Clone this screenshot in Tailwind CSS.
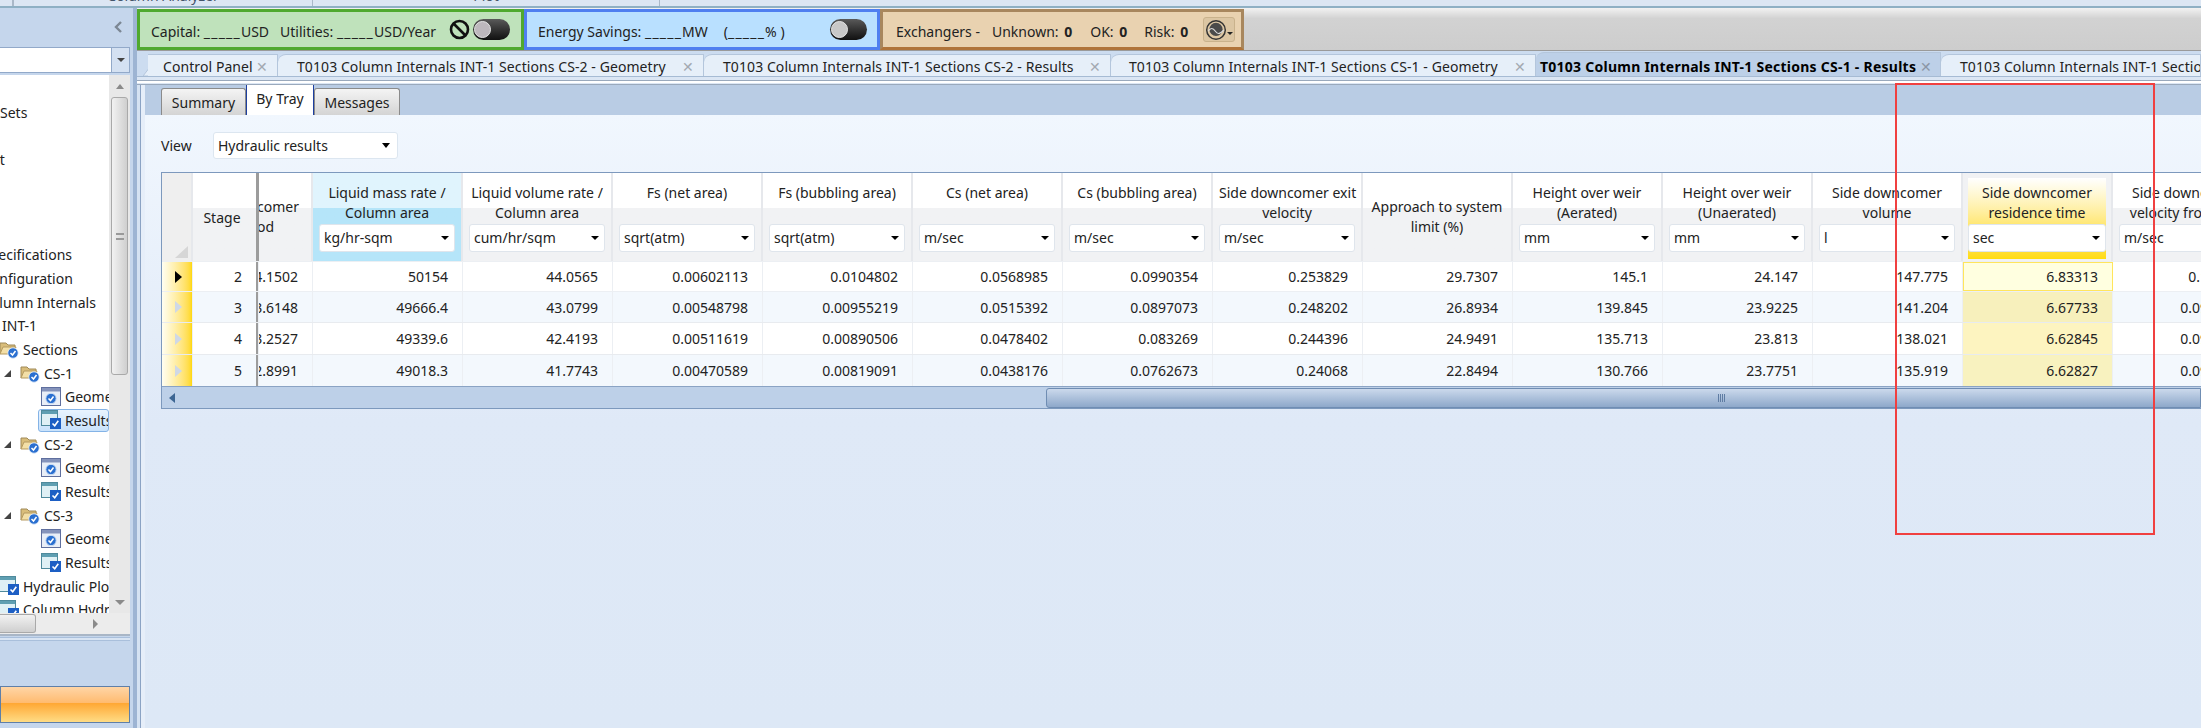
<!DOCTYPE html>
<html lang="en">
<head>
    <meta charset="UTF-8">
    <title>T0103 Column Internals</title>
    <script src="https://cdn.jsdelivr.net/npm/@tailwindcss/browser@4"></script>
</head>
<body>
<svg class="hidden">
    <symbol id="folder" viewBox="0 0 20 20">
        <path d="M1 15V4h6l2 2h7v2" fill="#d9bd7a" stroke="#a08a58"/>
        <path d="M1 15l3-7h13l-3 7z" fill="#f3dfa6" stroke="#b59a60"/>
        <circle cx="14" cy="14" r="5.2" fill="#2a6fd0" stroke="#e3eefa" stroke-width="0.8"/>
        <path d="M11.5 14l2 2 3-4" fill="none" stroke="#fff" stroke-width="1.5"/>
    </symbol>
    <symbol id="geom" viewBox="0 0 20 20">
        <rect x="0.5" y="0.5" width="19" height="18" fill="#e9eef7" stroke="#5f6f9e"/>
        <rect x="1" y="1" width="18" height="3.5" fill="#8593bb"/>
        <circle cx="10" cy="11.5" r="5.2" fill="#2a6fd0" stroke="#cfe0f6"/>
        <path d="M7.5 11.5l2 2 3-4" fill="none" stroke="#fff" stroke-width="1.5"/>
    </symbol>
    <symbol id="res" viewBox="0 0 20 20">
        <rect x="0.5" y="0.5" width="16" height="15" fill="#dff0f5" stroke="#4f8a9c"/>
        <rect x="1" y="1" width="15" height="3" fill="#5f9fb2"/>
        <rect x="9" y="8" width="11" height="11" fill="#1d5fc4"/>
        <path d="M11.5 13.5l2.2 2.2 3.6-5" fill="none" stroke="#fff" stroke-width="1.6"/>
    </symbol>
</svg>

<div class="relative w-[2201px] h-[728px] overflow-hidden bg-[#dde8f6] text-[14px] text-[#222] font-['Noto_Sans',sans-serif]">

    <!-- menu strip, cut off at the top of the shot -->
    <div class="flex h-[8px] overflow-hidden bg-[#dce6f3] border-b-2 border-[#8fb0c4] text-[#44546a]">
        <div class="w-[13px] border-r border-[#aab8c8]"></div>
        <div class="w-[300px] border-x border-[#aab8c8] text-center leading-[20px] -mt-[14px]">Column Analyzer</div>
        <div class="w-[347px] border-r border-[#aab8c8] text-center leading-[20px] -mt-[14px]">Plot</div>
    </div>

    <div class="flex h-[720px]">
        <!-- left navigator -->
        <div class="w-[137px] shrink-0 bg-[#c5d6ec] border-r-4 border-[#9db4d3]">
            <div class="h-[39px] flex items-center justify-end pr-[11px] pb-[2px]">
                <svg width="8" height="12" viewBox="0 0 8 12"><path d="M7 1L2 6l5 5" fill="none" stroke="#7c8794" stroke-width="2.4"/></svg>
            </div>
            <div class="h-[26px] w-[130px] flex justify-end bg-white border-y border-r border-[#92a9c9]">
                <div class="w-[18px] bg-[#d4e1f2] border-l border-[#92a9c9] flex items-center justify-center">
                    <div class="w-0 h-0 border-x-[4px] border-t-[4px] border-x-transparent border-t-[#444]"></div>
                </div>
            </div>
            <div class="mt-[2px] w-[130px] h-[561px] border-b-2 border-[#a9b6c6] bg-white">
                <div class="flex h-[538px]">
                    <div class="w-[109px] h-full overflow-hidden">
                        <div class="-ml-[40px] w-[149px] pt-[2px] [&_svg]:shrink-0 [&>div]:h-[23.7px] [&>div]:flex [&>div]:items-center [&>div]:whitespace-nowrap [&>div]:overflow-hidden">
                            <div></div>
                            <div class="pl-[40px]">Sets</div>
                            <div></div>
                            <div class="pl-[9px]">Input</div>
                            <div></div>
                            <div></div>
                            <div></div>
                            <div class="pl-[22px]">Specifications</div>
                            <div class="pl-[22px]">Configuration</div>
                            <div class="pl-[22px]">Column Internals</div>
                            <div class="pl-[42px]">INT-1</div>
                            <div class="pl-[39px] gap-[4px]"><svg class="w-[20px] h-[20px]"><use href="#folder"/></svg>Sections</div>
                            <div class="pl-[43px]">
                                <svg class="w-[9px] h-[9px] mr-[8px]" viewBox="0 0 9 9"><path d="M8 1v7H1z" fill="#444"/></svg>
                                <svg class="w-[20px] h-[20px] mr-[4px]"><use href="#folder"/></svg>CS-1
                            </div>
                            <div class="pl-[81px] gap-[4px]"><svg class="w-[20px] h-[20px]"><use href="#geom"/></svg>Geometry</div>
                            <div class="ml-[78px] pl-[2px] gap-[4px] bg-gradient-to-b from-[#e8f3fe] to-[#c9e2fb] border border-[#84b3e6] rounded-[3px]"><svg class="w-[20px] h-[20px]"><use href="#res"/></svg>Results</div>
                            <div class="pl-[43px]">
                                <svg class="w-[9px] h-[9px] mr-[8px]" viewBox="0 0 9 9"><path d="M8 1v7H1z" fill="#444"/></svg>
                                <svg class="w-[20px] h-[20px] mr-[4px]"><use href="#folder"/></svg>CS-2
                            </div>
                            <div class="pl-[81px] gap-[4px]"><svg class="w-[20px] h-[20px]"><use href="#geom"/></svg>Geometry</div>
                            <div class="pl-[81px] gap-[4px]"><svg class="w-[20px] h-[20px]"><use href="#res"/></svg>Results</div>
                            <div class="pl-[43px]">
                                <svg class="w-[9px] h-[9px] mr-[8px]" viewBox="0 0 9 9"><path d="M8 1v7H1z" fill="#444"/></svg>
                                <svg class="w-[20px] h-[20px] mr-[4px]"><use href="#folder"/></svg>CS-3
                            </div>
                            <div class="pl-[81px] gap-[4px]"><svg class="w-[20px] h-[20px]"><use href="#geom"/></svg>Geometry</div>
                            <div class="pl-[81px] gap-[4px]"><svg class="w-[20px] h-[20px]"><use href="#res"/></svg>Results</div>
                            <div class="pl-[39px] gap-[4px]"><svg class="w-[20px] h-[20px]"><use href="#res"/></svg>Hydraulic Plots</div>
                            <div class="pl-[39px] gap-[4px]"><svg class="w-[20px] h-[20px]"><use href="#res"/></svg>Column Hydraulics</div>
                        </div>
                    </div>
                    <div class="w-[21px] bg-[#e8e8e8] flex flex-col items-center">
                        <div class="h-[22px] flex items-center"><div class="w-0 h-0 border-x-[4px] border-b-[5px] border-x-transparent border-b-[#8a8a8a]"></div></div>
                        <div class="w-[17px] h-[278px] rounded-[3px] border border-[#a9a9a9] bg-gradient-to-r from-[#f2f2f2] to-[#cfcfcf] flex items-center justify-center">
                            <div class="w-[8px] h-[7px] border-y-2 border-[#999]"></div>
                        </div>
                        <div class="mt-auto h-[22px] flex items-center"><div class="w-0 h-0 border-x-[5px] border-t-[5px] border-x-transparent border-t-[#8a8a8a]"></div></div>
                    </div>
                </div>
                <div class="h-[21px] bg-[#ececec] flex items-center">
                    <div class="w-[36px] h-[19px] rounded-r-[3px] border border-l-0 border-[#a9a9a9] bg-gradient-to-b from-[#f2f2f2] to-[#cfcfcf]"></div>
                    <div class="ml-[57px] w-0 h-0 border-y-[5px] border-l-[5px] border-y-transparent border-l-[#8a8a8a]"></div>
                </div>
            </div>
            <div class="mt-[1px] h-[4px] w-[130px] bg-[#d8e4f3] border-y border-[#a9bfdb]"></div>
            <div class="mt-[45px] w-[130px] h-[37px] border border-[#5f7fa8] bg-[linear-gradient(#ffd5a6,#ffbb70_45%,#ffa733_46%,#ffdc85)]"></div>
        </div>

        <div class="w-[2064px] flex flex-col">
            <!-- status bar -->
            <div class="h-[43px] flex items-end bg-gradient-to-b from-[#f2f2f2] via-[#d2d2d2] via-[25%] to-[#cdcdcd] border-b border-[#9a9a9a] [&_span]:mt-[4px]">
                <div class="w-[387px] h-[41px] flex items-center pl-[11px] bg-[#bfe2bb] border-[3px] border-[#4fa92f]">
                    <span>Capital: <span class="tracking-[1.2px]">_____</span>USD</span>
                    <span class="ml-[11px]">Utilities: <span class="tracking-[1.2px]">_____</span>USD/Year</span>
                    <svg class="ml-[13px] w-[21px] h-[21px] shrink-0" viewBox="0 0 21 21"><circle cx="10.5" cy="10.5" r="8.5" fill="none" stroke="#111" stroke-width="2.6"/><path d="M4.5 4.5l12 12" stroke="#111" stroke-width="2.6"/></svg>
                    <div class="ml-[3px] w-[37px] h-[21px] shrink-0 rounded-full bg-gradient-to-b from-[#5a5a5a] to-[#111] flex items-center pl-[1px]">
                        <div class="w-[17px] h-[17px] rounded-full bg-[#bdb8bd] border border-[#e5e5e5]"></div>
                    </div>
                </div>
                <div class="w-[356px] h-[41px] flex items-center pl-[11px] bg-[#b9e0ff] border-[3px] border-[#4f7ff0]">
                    <span>Energy Savings: <span class="tracking-[1.2px]">_____</span>MW</span>
                    <span class="ml-[16px]">(<span class="tracking-[1.2px]">_____</span>%&nbsp;)</span>
                    <div class="ml-auto mr-[10px] w-[37px] h-[21px] shrink-0 rounded-full bg-gradient-to-b from-[#5a5a5a] to-[#111] flex items-center pl-[1px]">
                        <div class="w-[17px] h-[17px] rounded-full bg-[#c8c8c8] border border-[#e5e5e5]"></div>
                    </div>
                </div>
                <div class="w-[364px] h-[41px] flex items-center pl-[13px] bg-[#e9d2b0] border-[3px] border-[#a8875e] border-b-[#b0743a]">
                    <span>Exchangers -</span>
                    <span class="ml-[12px]">Unknown: <b class="ml-[2px]">0</b></span>
                    <span class="ml-[18px]">OK: <b class="ml-[2px]">0</b></span>
                    <span class="ml-[17px]">Risk: <b class="ml-[2px]">0</b></span>
                    <div class="ml-[15px] w-[32px] h-[25px] shrink-0 rounded-[3px] bg-[#dcc6a3] border border-[#c9b28c] flex items-center pl-[1px]">
                        <svg class="w-[22px] h-[22px] shrink-0" viewBox="0 0 18 18"><circle cx="9" cy="9" r="7.6" fill="none" stroke="#333" stroke-width="1.2"/><circle cx="9" cy="8.5" r="5.4" fill="#4a4a4a"/><path d="M2.5 10c2-3 4-3 6 0s4 2 7-1" fill="none" stroke="#ddd" stroke-width="0.9"/></svg>
                        <div class="mt-[8px] w-0 h-0 border-x-[3px] border-t-[3px] border-x-transparent border-t-[#222]"></div>
                    </div>
                </div>
            </div>

            <!-- document tabs -->
            <div class="relative h-[26px] flex items-end pl-[11px] bg-[#ccdcf0] border-b border-[#a6bbd4] whitespace-nowrap tracking-[0.08px] [&>div]:relative [&>div]:h-[22px] [&>div]:pt-[2px] [&>div]:flex [&>div]:items-center [&>div]:justify-between [&>div]:bg-[#e6eff9] [&>div]:border-t [&>div]:border-r [&>div]:border-[#b4c6dc] [&>div]:rounded-tl-[8px] [&>div]:pr-[9px]">
                <svg class="absolute left-[6px] bottom-0 w-[20px] h-[22px]" viewBox="0 0 20 22"><path d="M0 22L17 0h3v22z" fill="#e6eff9" stroke="#b4c6dc"/></svg>
                <div class="w-[130px] pl-[15px] !border-t-[#b4c6dc] !rounded-none">Control Panel<span class="text-[#a3a9b2]">✕</span></div>
                <div class="w-[426px] pl-[19px]">T0103 Column Internals INT-1 Sections CS-2 - Geometry<span class="text-[#a3a9b2]">✕</span></div>
                <div class="w-[407px] pl-[19px]">T0103 Column Internals INT-1 Sections CS-2 - Results<span class="text-[#a3a9b2]">✕</span></div>
                <div class="w-[425px] pl-[18px]">T0103 Column Internals INT-1 Sections CS-1 - Geometry<span class="text-[#a3a9b2]">✕</span></div>
                <div class="w-[405px] !h-[24px] !pt-[4px] pl-[4px] font-bold !bg-[#bdd0e8] !pr-[8px] text-black tracking-[0.25px]">T0103 Column Internals INT-1 Sections CS-1 - Results<span class="text-[#8b96a6] font-normal">✕</span></div>
                <div class="w-[260px] pl-[19px] overflow-hidden !justify-start">T0103 Column Internals INT-1 Sections CS-1 - Hydraulic Plots</div>
            </div>
            <div class="h-[8px] bg-[#dbe6f4] border-b border-[#9aa9bc]">
                <div class="mt-[3px] h-[3px] bg-white border-t border-[#9aa9bc]"></div>
            </div>

            <div class="flex-1 flex min-h-0">
                <div class="w-[3px] bg-[#d5e2f2]"></div>
                <div class="w-[5px] bg-[#e6eef9] border-l border-[#8ba3c4]"></div>
                <div class="w-[2056px]">
                    <!-- sub tabs -->
                    <div class="h-[30px] flex items-end pl-[16px] bg-[#b9cce4]">
                        <div class="w-[85px] h-[27px] pt-[3px] text-center rounded-t-[3px] border border-b-0 border-[#8b8b8b] bg-gradient-to-b from-[#f4f4f4] to-[#d4d4d4]">Summary</div>
                        <div class="w-[68px] h-[30px] pt-[3px] text-center bg-white border-x border-[#1d3fa0]">By Tray</div>
                        <div class="w-[86px] h-[27px] pt-[3px] text-center rounded-t-[3px] border border-b-0 border-[#8b8b8b] bg-gradient-to-b from-[#f4f4f4] to-[#d4d4d4]">Messages</div>
                    </div>
                    <div class="h-[613px] pt-[17px] bg-gradient-to-b from-[#f1f7fe] via-[#dfe9f7] to-[#dde8f6]">
                        <div class="flex items-center pl-[16px] h-[27px]">
                            <span class="w-[52px]">View</span>
                            <div class="w-[185px] h-[27px] flex items-center justify-between px-[4px] pr-[7px] bg-white rounded-[3px] border border-[#dce6f0]">Hydraulic results
                                <div class="w-0 h-0 border-x-[4px] border-t-[5px] border-x-transparent border-t-black"></div>
                            </div>
                        </div>

                        <!-- results grid -->
                        <div class="ml-[16px] mt-[13px] w-[2040px] h-[237px] overflow-hidden bg-white border border-r-0 border-[#7d99bd]">
                            <div class="grid grid-cols-[31px_63px_3px_54px_repeat(13,150px)] h-[88px] [&>div]:relative [&>div]:h-[88px] [&>div]:bg-gradient-to-b [&>div]:from-white [&>div]:from-40% [&>div]:to-[#f1f2f4] [&>div]:to-40% [&>div]:border-r-2 [&>div]:border-[#e6e8ec] [&>div]:text-center [&>div]:leading-[20px]">
                                <div class="!bg-none !bg-[#efefef]">
                                    <div class="absolute right-[3px] bottom-[3px] w-0 h-0 border-l-[13px] border-b-[12px] border-l-transparent border-b-[#d6d6d6]"></div>
                                </div>
                                <div class="flex items-center justify-center pt-[2px] pr-[5px] !border-r-0">Stage</div>
                                <div class="!bg-none !bg-[#9c9c9c] !border-r-0"></div>
                                <div class="overflow-hidden flex flex-col justify-center !text-left">
                                    <div class="flex justify-end pr-[12px] whitespace-nowrap">Side downcomer</div>
                                    <div class="flex justify-end pr-[37px] whitespace-nowrap">period</div>
                                </div>

                                <div class="!from-[#e0f4fd] !to-[#b5e5f9] px-[6px] pt-[10px]"><div class="h-[41px]">Liquid mass rate /<br>Column area</div><div class="h-[28px] flex items-center justify-between pl-[4px] pr-[5px] bg-white rounded-[3px] border border-[#dfe5ec]">kg/hr-sqm<div class="w-0 h-0 border-x-[4px] border-t-[4px] border-x-transparent border-t-black"></div></div></div>
                                <div class="px-[6px] pt-[10px]"><div class="h-[41px]">Liquid volume rate /<br>Column area</div><div class="h-[28px] flex items-center justify-between pl-[4px] pr-[5px] bg-white rounded-[3px] border border-[#dfe5ec]">cum/hr/sqm<div class="w-0 h-0 border-x-[4px] border-t-[4px] border-x-transparent border-t-black"></div></div></div>
                                <div class="px-[6px] pt-[10px]"><div class="h-[41px]">Fs (net area)</div><div class="h-[28px] flex items-center justify-between pl-[4px] pr-[5px] bg-white rounded-[3px] border border-[#dfe5ec]">sqrt(atm)<div class="w-0 h-0 border-x-[4px] border-t-[4px] border-x-transparent border-t-black"></div></div></div>
                                <div class="px-[6px] pt-[10px]"><div class="h-[41px]">Fs (bubbling area)</div><div class="h-[28px] flex items-center justify-between pl-[4px] pr-[5px] bg-white rounded-[3px] border border-[#dfe5ec]">sqrt(atm)<div class="w-0 h-0 border-x-[4px] border-t-[4px] border-x-transparent border-t-black"></div></div></div>
                                <div class="px-[6px] pt-[10px]"><div class="h-[41px]">Cs (net area)</div><div class="h-[28px] flex items-center justify-between pl-[4px] pr-[5px] bg-white rounded-[3px] border border-[#dfe5ec]">m/sec<div class="w-0 h-0 border-x-[4px] border-t-[4px] border-x-transparent border-t-black"></div></div></div>
                                <div class="px-[6px] pt-[10px]"><div class="h-[41px]">Cs (bubbling area)</div><div class="h-[28px] flex items-center justify-between pl-[4px] pr-[5px] bg-white rounded-[3px] border border-[#dfe5ec]">m/sec<div class="w-0 h-0 border-x-[4px] border-t-[4px] border-x-transparent border-t-black"></div></div></div>
                                <div class="px-[6px] pt-[10px]"><div class="h-[41px] whitespace-nowrap">Side downcomer exit<br>velocity</div><div class="h-[28px] flex items-center justify-between pl-[4px] pr-[5px] bg-white rounded-[3px] border border-[#dfe5ec]">m/sec<div class="w-0 h-0 border-x-[4px] border-t-[4px] border-x-transparent border-t-black"></div></div></div>
                                <div class="flex items-center justify-center px-[6px]">Approach to system<br>limit (%)</div>
                                <div class="px-[6px] pt-[10px]"><div class="h-[41px]">Height over weir<br>(Aerated)</div><div class="h-[28px] flex items-center justify-between pl-[4px] pr-[5px] bg-white rounded-[3px] border border-[#dfe5ec]">mm<div class="w-0 h-0 border-x-[4px] border-t-[4px] border-x-transparent border-t-black"></div></div></div>
                                <div class="px-[6px] pt-[10px]"><div class="h-[41px]">Height over weir<br>(Unaerated)</div><div class="h-[28px] flex items-center justify-between pl-[4px] pr-[5px] bg-white rounded-[3px] border border-[#dfe5ec]">mm<div class="w-0 h-0 border-x-[4px] border-t-[4px] border-x-transparent border-t-black"></div></div></div>
                                <div class="px-[6px] pt-[10px]"><div class="h-[41px]">Side downcomer<br>volume</div><div class="h-[28px] flex items-center justify-between pl-[4px] pr-[5px] bg-white rounded-[3px] border border-[#dfe5ec]">l<div class="w-0 h-0 border-x-[4px] border-t-[4px] border-x-transparent border-t-black"></div></div></div>
                                <div class="!bg-none !bg-[#f1f2f4] px-[5px] pt-[5px] pb-[2px]">
                                    <div class="h-[81px] pt-[5px] bg-gradient-to-b from-white via-[#ffe66b] via-[60%] to-[#ffdc0c]">
                                        <div class="h-[41px]">Side downcomer<br>residence time</div>
                                        <div class="h-[28px] flex items-center justify-between pl-[4px] pr-[5px] bg-white rounded-[3px] border border-[#dfe5ec]">sec<div class="w-0 h-0 border-x-[4px] border-t-[4px] border-x-transparent border-t-black"></div></div>
                                    </div>
                                </div>
                                <div class="px-[6px] pt-[10px]"><div class="h-[41px] whitespace-nowrap">Side downcomer<br>velocity from tray</div><div class="h-[28px] flex items-center justify-between pl-[4px] pr-[5px] bg-white rounded-[3px] border border-[#dfe5ec]">m/sec<div class="w-0 h-0 border-x-[4px] border-t-[4px] border-x-transparent border-t-black"></div></div></div>
                            </div>

                            <div class="grid grid-cols-[31px_63px_3px_54px_repeat(13,150px)] h-[31px] bg-white border-y border-[#eceff3] [&>div]:flex [&>div]:items-center [&>div]:justify-end [&>div]:pr-[14px] [&>div]:border-r [&>div]:border-[#eceff3] [&>div]:overflow-hidden [&>div]:whitespace-nowrap">
                                <div class="!justify-center !pr-0 pl-[2px] bg-gradient-to-r from-[#fffef2] to-[#ffd800]"><div class="w-0 h-0 border-y-[6px] border-l-[7px] border-y-transparent border-l-black"></div></div>
                                <div class="!border-r-0">2</div><div class="!p-0 bg-[#9c9c9c]"></div>
                                <div>24.1502</div><div>50154</div><div>44.0565</div><div>0.00602113</div><div>0.0104802</div><div>0.0568985</div><div>0.0990354</div><div>0.253829</div><div>29.7307</div><div>145.1</div><div>24.147</div><div>147.775</div>
                                <div class="bg-[#ffffe0] !border !border-[#ffe55c]">6.83313</div><div>0.100113</div>
                            </div>
                            <div class="grid grid-cols-[31px_63px_3px_54px_repeat(13,150px)] h-[31px] bg-[#f3f8fd] border-b border-[#e8ebef] [&>div]:flex [&>div]:items-center [&>div]:justify-end [&>div]:pr-[14px] [&>div]:border-r [&>div]:border-[#eceff3] [&>div]:overflow-hidden [&>div]:whitespace-nowrap">
                                <div class="!justify-center !pr-0 pl-[2px] bg-gradient-to-r from-[#fffef2] to-[#ffd800]"><div class="w-0 h-0 border-y-[6px] border-l-[7px] border-y-transparent border-l-[#cfd8e6]"></div></div>
                                <div class="!border-r-0">3</div><div class="!p-0 bg-[#9c9c9c]"></div>
                                <div>23.6148</div><div>49666.4</div><div>43.0799</div><div>0.00548798</div><div>0.00955219</div><div>0.0515392</div><div>0.0897073</div><div>0.248202</div><div>26.8934</div><div>139.845</div><div>23.9225</div><div>141.204</div>
                                <div class="bg-[#f7f0bc]">6.67733</div><div>0.0981624</div>
                            </div>
                            <div class="grid grid-cols-[31px_63px_3px_54px_repeat(13,150px)] h-[32px] bg-white border-b border-[#e8ebef] [&>div]:flex [&>div]:items-center [&>div]:justify-end [&>div]:pr-[14px] [&>div]:border-r [&>div]:border-[#eceff3] [&>div]:overflow-hidden [&>div]:whitespace-nowrap">
                                <div class="!justify-center !pr-0 pl-[2px] bg-gradient-to-r from-[#fffef2] to-[#ffd800]"><div class="w-0 h-0 border-y-[6px] border-l-[7px] border-y-transparent border-l-[#cfd8e6]"></div></div>
                                <div class="!border-r-0">4</div><div class="!p-0 bg-[#9c9c9c]"></div>
                                <div>23.2527</div><div>49339.6</div><div>42.4193</div><div>0.00511619</div><div>0.00890506</div><div>0.0478402</div><div>0.083269</div><div>0.244396</div><div>24.9491</div><div>135.713</div><div>23.813</div><div>138.021</div>
                                <div class="bg-[#fdf4c0]">6.62845</div><div>0.0963428</div>
                            </div>
                            <div class="grid grid-cols-[31px_63px_3px_54px_repeat(13,150px)] h-[31px] bg-[#f3f8fd] [&>div]:flex [&>div]:items-center [&>div]:justify-end [&>div]:pr-[14px] [&>div]:border-r [&>div]:border-[#eceff3] [&>div]:overflow-hidden [&>div]:whitespace-nowrap">
                                <div class="!justify-center !pr-0 pl-[2px] bg-gradient-to-r from-[#fffef2] to-[#ffd800]"><div class="w-0 h-0 border-y-[6px] border-l-[7px] border-y-transparent border-l-[#cfd8e6]"></div></div>
                                <div class="!border-r-0">5</div><div class="!p-0 bg-[#9c9c9c]"></div>
                                <div>22.8991</div><div>49018.3</div><div>41.7743</div><div>0.00470589</div><div>0.00819091</div><div>0.0438176</div><div>0.0762673</div><div>0.24068</div><div>22.8494</div><div>130.766</div><div>23.7751</div><div>135.919</div>
                                <div class="bg-[#f8f2bf]">6.62827</div><div>0.0948117</div>
                            </div>

                            <!-- horizontal scrollbar -->
                            <div class="h-[22px] flex items-center bg-[#bdd0e8] border-t border-[#8aa3c4]">
                                <div class="w-[20px] flex justify-center"><div class="w-0 h-0 border-y-[5px] border-r-[6px] border-y-transparent border-r-[#3d6693]"></div></div>
                                <div class="ml-[864px] w-[1156px] h-[20px] rounded-l-[3px] border border-[#6f8db3] bg-gradient-to-b from-[#cbd9ec] to-[#8ea8ca] flex items-center">
                                    <div class="ml-[671px] w-[8px] h-[8px] bg-[repeating-linear-gradient(90deg,#5f7ca3_0,#5f7ca3_1px,transparent_1px,transparent_2px)]"></div>
                                </div>
                            </div>
                        </div>
                    </div>
                </div>
            </div>
        </div>
    </div>

    <!-- reviewer's red marker over the shot -->
    <div class="absolute left-[1895px] top-[83px] w-[260px] h-[452px] border-2 border-[#f04040]"></div>
</div>
</body>
</html>
